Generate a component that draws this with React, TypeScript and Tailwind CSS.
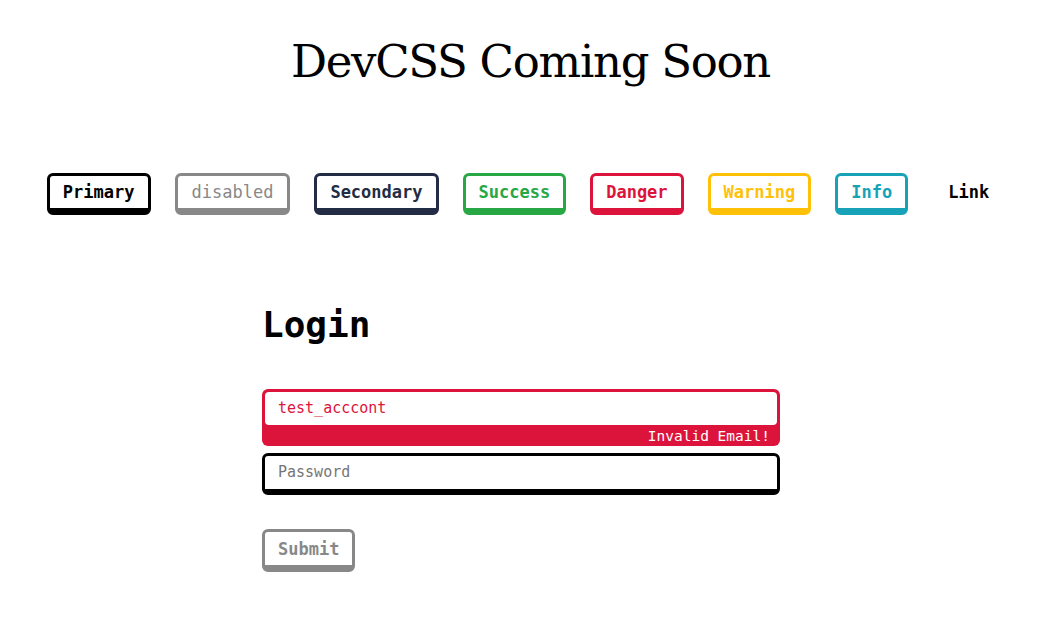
import React from "react";

const mono = { fontFamily: '"DejaVu Sans Mono", "Liberation Mono", monospace' };

const buttons = [
  { label: "Primary", cls: "border-black text-black px-[13px]" },
  { label: "disabled", cls: "border-[#888888] text-[#888888] font-normal px-[14px]" },
  { label: "Secondary", cls: "border-[#232c45] text-[#232c45] px-[13px]" },
  { label: "Success", cls: "border-[#28a745] text-[#28a745] px-[13px]" },
  { label: "Danger", cls: "border-[#dc143c] text-[#dc143c] px-[13px]" },
  { label: "Warning", cls: "border-[#ffc107] text-[#ffc107] px-[13px]" },
  { label: "Info", cls: "border-[#17a2b8] text-[#17a2b8] px-[13px]" },
  { label: "Link", cls: "border-transparent text-black px-[13px]" },
];

export default function App() {
  return (
    <div className="min-h-screen bg-white" style={mono}>
      <h1
        className="pt-[30px] text-center text-[45px] leading-[64px] tracking-[-1.3px] text-black"
        style={{ fontFamily: '"DejaVu Serif", "Liberation Serif", serif' }}
      >
        DevCSS Coming Soon
      </h1>
      <div className="mt-[79px] flex justify-center gap-[24px] pr-[9px]">
        {buttons.map((b) => (
          <button
            key={b.label}
            className={`rounded-[6px] border-[3px] border-b-[7px] bg-white h-[42px] text-[17px] font-bold leading-[20px] ${b.cls}`}
            style={mono}
          >
            {b.label}
          </button>
        ))}
      </div>
      <div className="ml-[262px] w-[518px] pt-[88px]">
        <h2 className="text-[36px] font-bold leading-[44px] text-black">Login</h2>
        <div className="mt-[42px] rounded-[6px] bg-[#dc143c] px-[3px] pt-[3px]">
          <div className="flex h-[33px] items-center rounded-[4px] bg-white px-[13px] text-[15px] text-[#dc143c]">
            test_acccont
          </div>
          <div className="flex h-[21px] items-center justify-end pr-[7px] text-[14.5px] leading-[18px] text-white">
            Invalid Email!
          </div>
        </div>
        <div className="mt-[7px] flex h-[42px] items-center rounded-[6px] border-[3px] border-b-[6px] border-black bg-white px-[13px] text-[15px] text-[#757575]">
          Password
        </div>
        <button
          className="mt-[34px] h-[43px] rounded-[6px] border-[3px] border-b-[7px] border-[#888888] bg-white px-[13px] text-[17px] font-bold leading-[20px] text-[#888888]"
          style={mono}
        >
          Submit
        </button>
      </div>
    </div>
  );
}
